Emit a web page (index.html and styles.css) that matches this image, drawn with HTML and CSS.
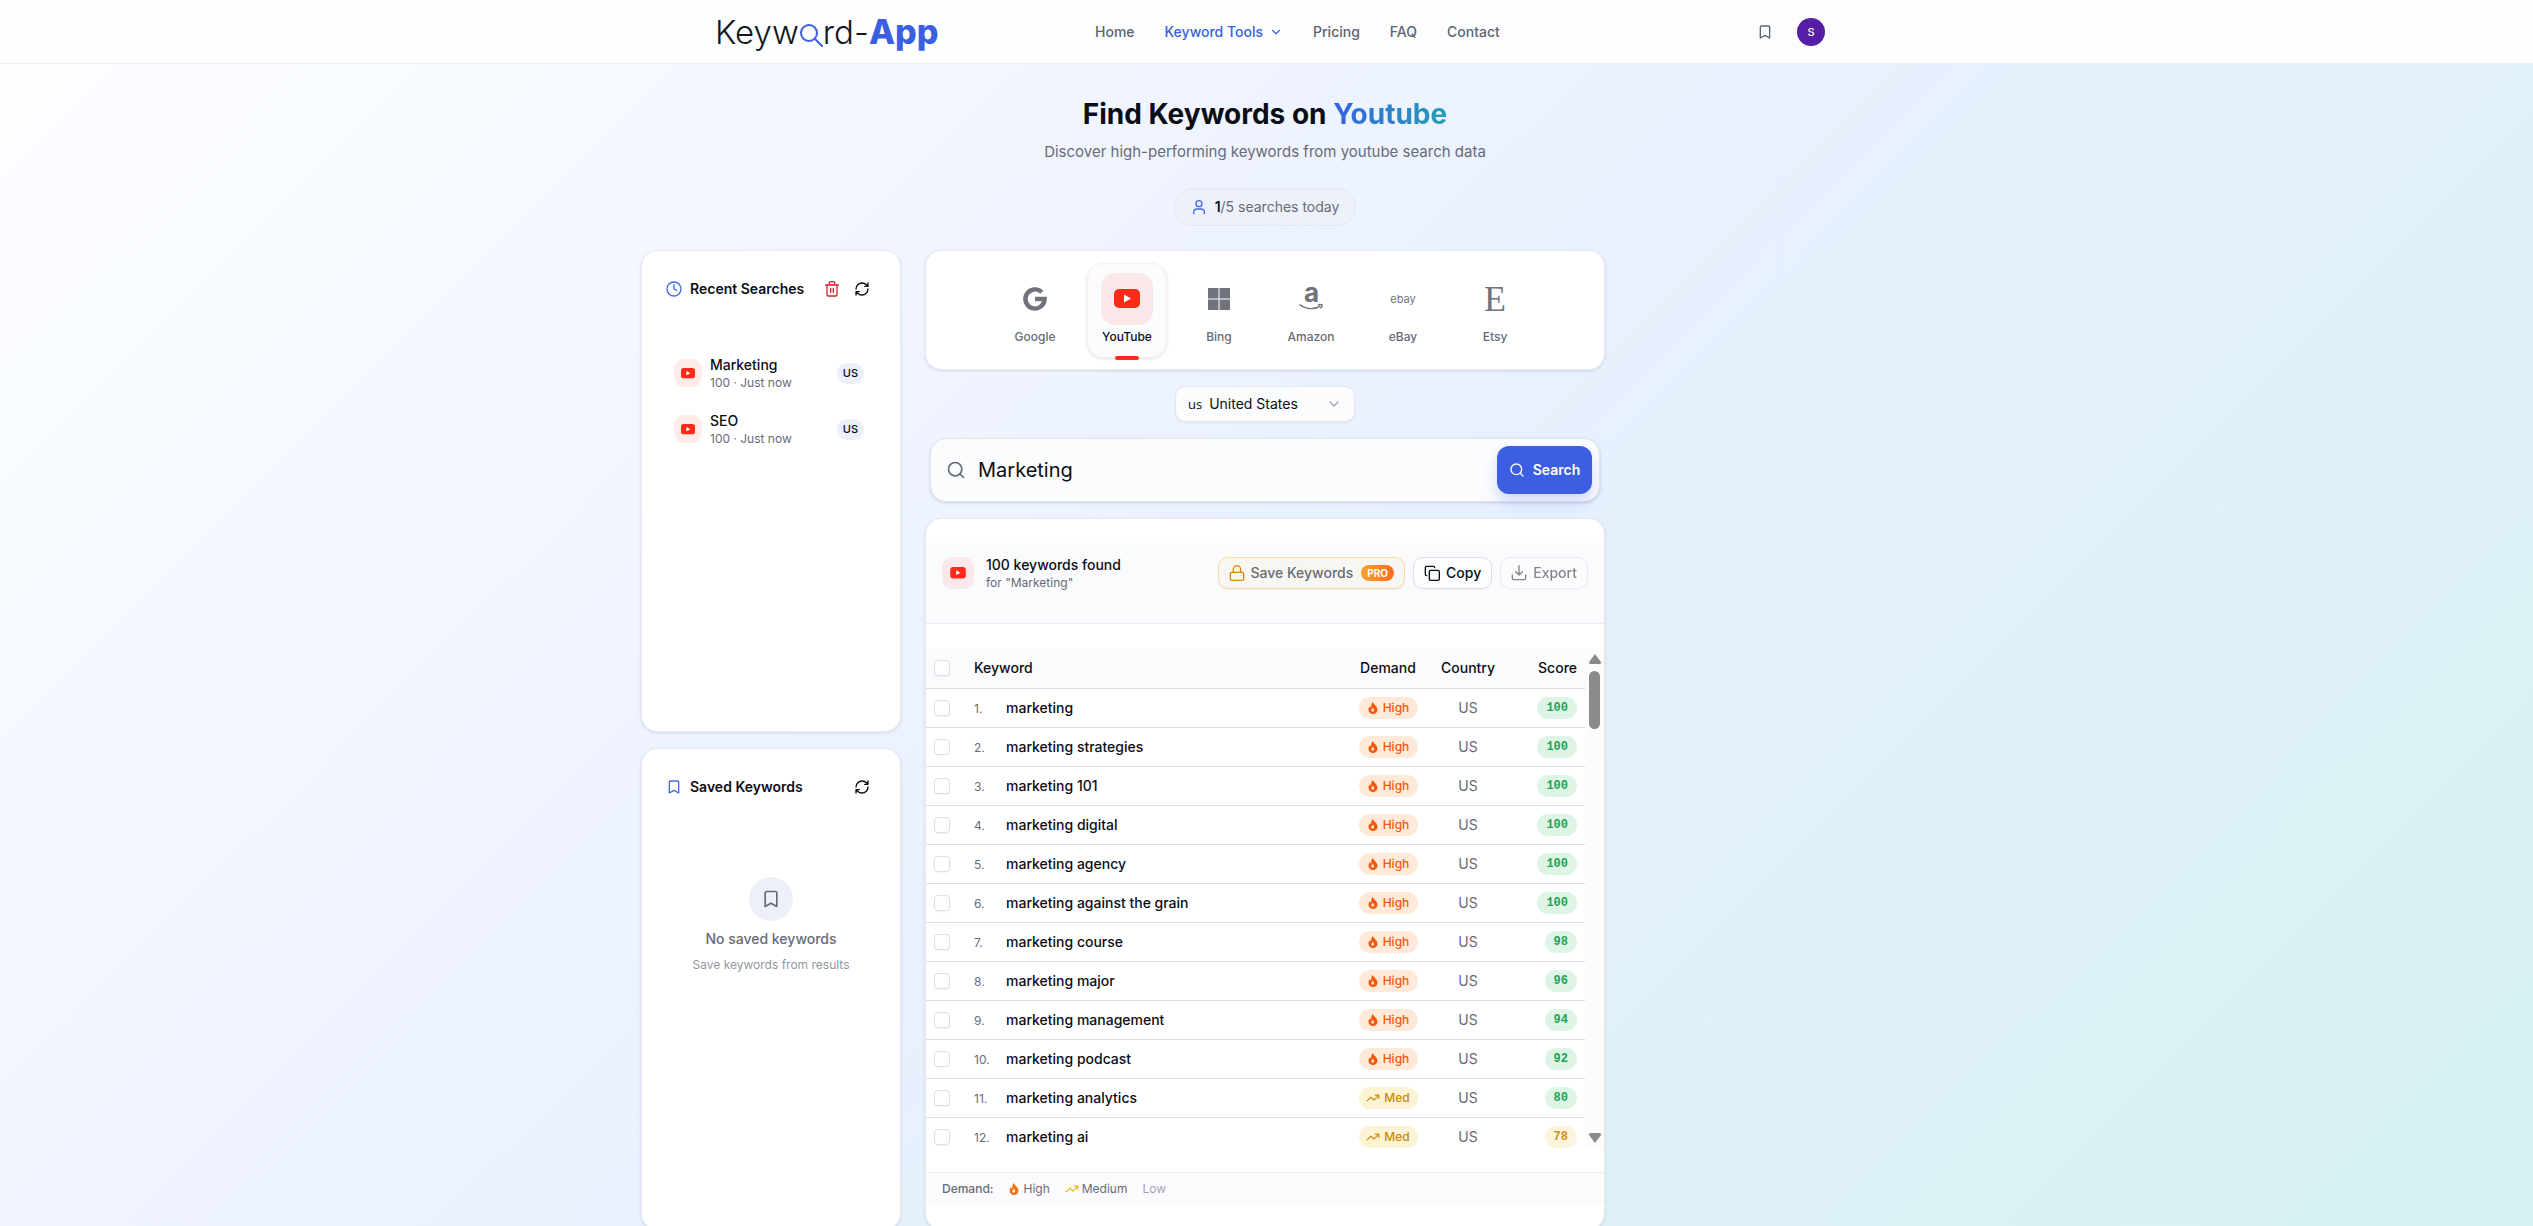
FILE: index.html
```html
<!DOCTYPE html>
<html lang="en">
<head>
<meta charset="utf-8">
<meta name="viewport" content="width=device-width, initial-scale=1">
<title>Find Keywords on Youtube - Keyword-App</title>
<link rel="stylesheet" href="styles.css">
</head>
<body>
<svg class="sprite" aria-hidden="true">
  <symbol id="bookmark" viewBox="0 0 24 24"><path d="m19 21-7-4-7 4V5a2 2 0 0 1 2-2h10a2 2 0 0 1 2 2v16z"/></symbol>
  <symbol id="chevron" viewBox="0 0 24 24"><path d="m6 9 6 6 6-6"/></symbol>
  <symbol id="refresh" viewBox="0 0 24 24"><path d="M3 12a9 9 0 0 1 9-9 9.75 9.75 0 0 1 6.74 2.74L21 8M21 3v5h-5M21 12a9 9 0 0 1-9 9 9.75 9.75 0 0 1-6.74-2.74L3 16M8 16H3v5"/></symbol>
  <symbol id="search" viewBox="0 0 24 24"><circle cx="11" cy="11" r="8"/><path d="m21 21-4.300-4.300"/></symbol>
  <symbol id="trend" viewBox="0 0 24 24"><path d="M22 7 13.500 15.500 8.500 10.500 2 17M16 7h6v6"/></symbol>
  <symbol id="flame" viewBox="0 0 24 24"><path fill="currentColor" stroke="none" fill-rule="evenodd" d="M11.500 0C13.500 5 21 8.500 21 15.500 21 20.500 17 24 12 24S3 20.500 3 15.500C3 12 4.500 9.800 6.300 8 6.500 10 7.200 11 8.300 11.500 8 7 9 3 11.500 0ZM11 11C11.500 13.500 8.500 14 8.500 16.500 8.500 18.200 9.800 19.300 11.400 19.300S14.200 18.200 14.200 16.500C14.200 14.300 12.500 13 11 11Z"/></symbol>
  <symbol id="youtube" viewBox="0 0 26 20"><rect width="26" height="19" y="0" rx="5" fill="#ff2a1a" stroke="none"/><path d="M10 5.500v8l7-4z" fill="#fff" stroke="none"/></symbol>
</svg>

<header class="topbar">
  <div class="topbar-inner">
    <a class="logo" href="#" aria-label="Keyword-App">
      <span>Keyw</span><svg class="logo-glass" viewBox="0 0 24 24" aria-hidden="true"><circle cx="10" cy="10" r="8"/><path d="m16 16 7 7"/></svg><span>rd-</span><b>App</b>
    </a>
    <nav class="nav">
      <a href="#">Home</a>
      <a href="#" class="active">Keyword Tools <svg class="icon s14"><use href="#chevron"/></svg></a>
      <a href="#">Pricing</a>
      <a href="#">FAQ</a>
      <a href="#">Contact</a>
    </nav>
    <div class="account">
      <button class="ghost" aria-label="Bookmarks"><svg class="icon s16"><use href="#bookmark"/></svg></button>
      <button class="avatar" aria-label="Account">S</button>
    </div>
  </div>
</header>

<main class="page">
  <h1>Find Keywords on <span>Youtube</span></h1>
  <p class="subtitle">Discover high-performing keywords from youtube search data</p>
  <div class="quota">
    <svg class="icon s16" viewBox="0 0 24 24"><circle cx="12" cy="7" r="4.500"/><path d="M4 22v-2a5 5 0 0 1 5-5h6a5 5 0 0 1 5 5v2"/></svg>
    <span><b>1</b>/5 searches today</span>
  </div>

  <div class="columns">
    <aside class="side">
      <section class="card panel">
        <div class="panel-head">
          <svg class="icon s16 blue" viewBox="0 0 24 24"><circle cx="12" cy="12" r="10.500"/><path d="M12 5.500V12l4 2"/></svg>
          <h2>Recent Searches</h2>
          <button class="ghost red" aria-label="Clear recent searches"><svg class="icon s16" viewBox="0 0 24 24"><path d="M2.500 6h19M19.500 6v14.500a2 2 0 0 1-2 2h-11a2 2 0 0 1-2-2V6M8 6V3a2 2 0 0 1 2-2h4a2 2 0 0 1 2 2v3M10 11v6M14 11v6"/></svg></button>
          <button class="ghost" aria-label="Refresh recent searches"><svg class="icon s16"><use href="#refresh"/></svg></button>
        </div>
        <ul class="recent">
          <li><span class="tile small"><svg><use href="#youtube"/></svg></span><div><strong>Marketing</strong><small>100 · Just now</small></div><span class="region">US</span></li>
          <li><span class="tile small"><svg><use href="#youtube"/></svg></span><div><strong>SEO</strong><small>100 · Just now</small></div><span class="region">US</span></li>
        </ul>
      </section>
      <section class="card panel">
        <div class="panel-head">
          <svg class="icon s16 blue"><use href="#bookmark"/></svg>
          <h2>Saved Keywords</h2>
          <button class="ghost" aria-label="Refresh saved keywords"><svg class="icon s16"><use href="#refresh"/></svg></button>
        </div>
        <div class="empty">
          <span class="empty-icon"><svg class="icon s20"><use href="#bookmark"/></svg></span>
          <p>No saved keywords</p>
          <small>Save keywords from results</small>
        </div>
      </section>
    </aside>

    <div class="content">
      <div class="card platforms">
        <button><span class="pic"><svg class="glyph" viewBox="0 0 24 24"><path d="M18.800 5.200A9.600 9.600 0 1 0 21.600 12H12" fill="none" stroke="currentColor" stroke-width="4.400"/></svg></span>Google</button>
        <button class="selected"><span class="pic"><svg class="yt"><use href="#youtube"/></svg></span>YouTube</button>
        <button><span class="pic"><svg class="glyph" viewBox="0 0 24 24"><path fill="currentColor" d="M1 1h10.500v10.500H1zM12.500 1H23v10.500H12.500zM1 12.500h10.500V23H1zM12.500 12.500H23V23H12.500z"/></svg></span>Bing</button>
        <button><span class="pic"><svg class="glyph" viewBox="0 0 24 24"><text x="12.500" y="15" text-anchor="middle" font-size="26" font-weight="700" fill="currentColor">a</text><path d="M.500 17.500C7 22.500 15 23 21.500 18.800M19 17.800c1.500-.500 3-.700 4 0 .200 1-.400 2.500-1.500 3.600" fill="none" stroke="currentColor" stroke-width="1.400"/></svg></span>Amazon</button>
        <button><span class="pic"><span class="ebay">ebay</span></span>eBay</button>
        <button><span class="pic"><span class="etsy">E</span></span>Etsy</button>
      </div>

      <label class="country">
        <span>us</span>
        <select aria-label="Country"><option>United States</option></select>
        <svg class="icon s16"><use href="#chevron"/></svg>
      </label>

      <form class="searchbar">
        <svg class="icon s20"><use href="#search"/></svg>
        <input type="text" value="Marketing" aria-label="Keyword">
        <button type="button"><svg class="icon s16"><use href="#search"/></svg>Search</button>
      </form>

      <section class="card results">
        <div class="results-head">
          <span class="tile"><svg><use href="#youtube"/></svg></span>
          <div class="found"><strong>100 keywords found</strong><small>for "Marketing"</small></div>
          <button class="btn save"><svg class="icon s16" viewBox="0 0 24 24"><rect x="2" y="11" width="20" height="12" rx="2"/><path d="M6.500 11V6.500a5.500 5.500 0 0 1 11 0V11"/></svg>Save Keywords <span class="pro">PRO</span></button>
          <button class="btn"><svg class="icon s16" viewBox="0 0 24 24"><rect x="8" y="8" width="15" height="15" rx="2"/><path d="M4 16a2 2 0 0 1-2-2V4c0-1.100.900-2 2-2h10a2 2 0 0 1 2 2"/></svg>Copy</button>
          <button class="btn" disabled><svg class="icon s16" viewBox="0 0 24 24"><path d="M12 1v14M7 10l5 5 5-5M2 15v5a2 2 0 0 0 2 2h16a2 2 0 0 0 2-2v-5"/></svg>Export</button>
        </div>

        <div class="viewport">
          <div class="rows">
            <table>
              <colgroup><col class="c-check"><col><col class="c-demand"><col class="c-country"><col class="c-score"></colgroup>
              <thead><tr><th><input type="checkbox" aria-label="Select all"></th><th>Keyword</th><th class="mid">Demand</th><th class="mid">Country</th><th class="end">Score</th></tr></thead>
              <tbody>
                <tr><td><input type="checkbox" aria-label="Select marketing"></td><td><i>1.</i>marketing</td><td class="mid"><span class="demand high"><svg class="icon s12"><use href="#flame"/></svg>High</span></td><td class="mid muted">US</td><td class="end"><span class="score">100</span></td></tr>
                <tr><td><input type="checkbox" aria-label="Select marketing strategies"></td><td><i>2.</i>marketing strategies</td><td class="mid"><span class="demand high"><svg class="icon s12"><use href="#flame"/></svg>High</span></td><td class="mid muted">US</td><td class="end"><span class="score">100</span></td></tr>
                <tr><td><input type="checkbox" aria-label="Select marketing 101"></td><td><i>3.</i>marketing 101</td><td class="mid"><span class="demand high"><svg class="icon s12"><use href="#flame"/></svg>High</span></td><td class="mid muted">US</td><td class="end"><span class="score">100</span></td></tr>
                <tr><td><input type="checkbox" aria-label="Select marketing digital"></td><td><i>4.</i>marketing digital</td><td class="mid"><span class="demand high"><svg class="icon s12"><use href="#flame"/></svg>High</span></td><td class="mid muted">US</td><td class="end"><span class="score">100</span></td></tr>
                <tr><td><input type="checkbox" aria-label="Select marketing agency"></td><td><i>5.</i>marketing agency</td><td class="mid"><span class="demand high"><svg class="icon s12"><use href="#flame"/></svg>High</span></td><td class="mid muted">US</td><td class="end"><span class="score">100</span></td></tr>
                <tr><td><input type="checkbox" aria-label="Select marketing against the grain"></td><td><i>6.</i>marketing against the grain</td><td class="mid"><span class="demand high"><svg class="icon s12"><use href="#flame"/></svg>High</span></td><td class="mid muted">US</td><td class="end"><span class="score">100</span></td></tr>
                <tr><td><input type="checkbox" aria-label="Select marketing course"></td><td><i>7.</i>marketing course</td><td class="mid"><span class="demand high"><svg class="icon s12"><use href="#flame"/></svg>High</span></td><td class="mid muted">US</td><td class="end"><span class="score">98</span></td></tr>
                <tr><td><input type="checkbox" aria-label="Select marketing major"></td><td><i>8.</i>marketing major</td><td class="mid"><span class="demand high"><svg class="icon s12"><use href="#flame"/></svg>High</span></td><td class="mid muted">US</td><td class="end"><span class="score">96</span></td></tr>
                <tr><td><input type="checkbox" aria-label="Select marketing management"></td><td><i>9.</i>marketing management</td><td class="mid"><span class="demand high"><svg class="icon s12"><use href="#flame"/></svg>High</span></td><td class="mid muted">US</td><td class="end"><span class="score">94</span></td></tr>
                <tr><td><input type="checkbox" aria-label="Select marketing podcast"></td><td><i>10.</i>marketing podcast</td><td class="mid"><span class="demand high"><svg class="icon s12"><use href="#flame"/></svg>High</span></td><td class="mid muted">US</td><td class="end"><span class="score">92</span></td></tr>
                <tr><td><input type="checkbox" aria-label="Select marketing analytics"></td><td><i>11.</i>marketing analytics</td><td class="mid"><span class="demand med"><svg class="icon s14"><use href="#trend"/></svg>Med</span></td><td class="mid muted">US</td><td class="end"><span class="score">80</span></td></tr>
                <tr><td><input type="checkbox" aria-label="Select marketing ai"></td><td><i>12.</i>marketing ai</td><td class="mid"><span class="demand med"><svg class="icon s14"><use href="#trend"/></svg>Med</span></td><td class="mid muted">US</td><td class="end"><span class="score fair">78</span></td></tr>
              </tbody>
            </table>
          </div>
          <div class="track" aria-hidden="true">
            <svg viewBox="0 0 12 10"><path d="M6 0 12 8q0 2-1 2H1q-1 0-1-2z"/></svg>
            <span class="thumb"></span>
            <svg viewBox="0 0 12 10"><path d="M6 10 12 2q0-2-1-2H1Q0 0 0 2z"/></svg>
          </div>
        </div>

        <div class="legend">
          <b>Demand:</b>
          <span><svg class="icon s12 orange"><use href="#flame"/></svg>High</span>
          <span><svg class="icon s14 yellow"><use href="#trend"/></svg>Medium</span>
          <span class="low">Low</span>
        </div>
      </section>
    </div>
  </div>
</main>
</body>
</html>
```
FILE: styles.css
```css
* { box-sizing: border-box; }

:root {
  --ink: #0b0e16;
  --muted: #676b78;
  --blue: #3b5fe0;
  --line: #e8eaf0;
}

html { scrollbar-width: none; }

body {
  margin: 0;
  min-height: 100vh;
  font: 14px/20px Inter, "Liberation Sans", sans-serif;
  color: var(--ink);
  background: linear-gradient(135deg, #fdfeff 0%, #e9f0ff 50%, #d5f2f0 100%);
}

h1, h2, p, ul { margin: 0; padding: 0; }
button, input, select { font: inherit; color: inherit; }
button { border: 0; background: none; padding: 0; cursor: pointer; }
small { font-size: 12px; line-height: 16px; }
strong { font-weight: 500; }

.sprite { position: absolute; width: 0; height: 0; }
.icon { flex: none; fill: none; stroke: currentColor; stroke-width: 2; stroke-linecap: round; stroke-linejoin: round; }
.s12 { width: 12px; height: 12px; }
.s14 { width: 14px; height: 14px; }
.s16 { width: 16px; height: 16px; }
.s20 { width: 20px; height: 20px; }
.blue { color: #4468e6; }

/* Top bar */
.topbar { background: #fcfdff; border-bottom: 1px solid #ebedf1; }
.topbar-inner {
  display: grid;
  grid-template-columns: 390px 1fr auto;
  align-items: center;
  max-width: 1155px;
  height: 63px;
  margin: 0 auto;
  padding: 0 19px 0 16px;
}
.logo { display: flex; align-items: center; padding-left: 10px; font-size: 33px; line-height: 40px; font-weight: 300; color: #15171c; text-decoration: none; }
.logo b { color: var(--blue); font-size: 34px; font-weight: 800; }
.logo-glass { width: 24px; height: 24px; margin-top: 6px; fill: none; stroke: var(--blue); stroke-width: 2; stroke-linecap: round; }
.nav { display: flex; gap: 30px; }
.nav a { display: flex; align-items: center; gap: 6px; color: #5f636e; font-weight: 500; text-decoration: none; }
.nav .active { color: var(--blue); }
.account { display: flex; align-items: center; gap: 18px; }
.account .ghost { color: #5f636e; }
.avatar { width: 28px; height: 28px; border-radius: 50%; background: #561ea6; color: #fff; font-size: 11px; line-height: 16px; font-weight: 500; }
.ghost { display: grid; place-items: center; width: 28px; height: 28px; }
.red { color: #d8202f; }

/* Page intro */
.page { max-width: 1283px; margin: 0 auto; padding: 32px 19px 0 16px; }
h1 { font-size: 28px; line-height: 36px; font-weight: 700; text-align: center; }
h1 span { color: transparent; background: linear-gradient(90deg, #3563df, #249eb4); background-clip: text; -webkit-background-clip: text; }
.subtitle { margin-top: 8px; color: var(--muted); font-size: 15px; line-height: 24px; text-align: center; }
.quota {
  display: flex;
  align-items: center;
  gap: 8px;
  width: max-content;
  height: 38px;
  margin: 24px auto;
  padding: 0 16px;
  border: 1px solid #e4e8f1;
  border-radius: 19px;
  background: #edf1f9;
  color: var(--muted);
}
.quota .icon { color: #4468e6; }
.quota b { color: var(--ink); font-weight: 600; }

.columns { display: grid; grid-template-columns: 260px minmax(0, 680px) 260px; gap: 24px; }
.card { background: #fff; border: 1px solid var(--line); border-radius: 16px; box-shadow: 0 1px 3px rgba(20, 30, 60, .12); }

/* Side panels */
.side { display: grid; grid-template-rows: 1fr 1fr; gap: 16px; }
.panel { padding: 24px; }
.panel-head { display: flex; align-items: center; gap: 2px; height: 28px; }
.panel-head h2 { flex: 1; margin-left: 6px; font-size: 14px; line-height: 20px; font-weight: 600; }
.recent { list-style: none; display: grid; margin-top: 42px; }
.recent li { display: flex; align-items: center; gap: 8px; height: 56px; padding: 0 12px 0 8px; }
.recent div { display: grid; flex: 1; }
.recent small, .found small { color: var(--muted); }
.tile { display: grid; place-items: center; flex: none; width: 32px; height: 32px; border-radius: 10px; background: #fae8ea; }
.tile svg { width: 16px; height: 12px; }
.tile.small { width: 28px; height: 28px; background: #ffebea; }
.tile.small svg { width: 14px; height: 11px; }
.region { padding: 2px 6px; border-radius: 11px; background: #ecf0f8; font-size: 11px; line-height: 17px; font-weight: 500; }
.empty { display: grid; justify-items: center; margin-top: 76px; color: var(--muted); }
.empty-icon { display: grid; place-items: center; width: 44px; height: 44px; border-radius: 50%; background: #ecf0f8; }
.empty p { margin: 8px 0; font-weight: 500; }
.empty small { color: #93969f; }

/* Platform picker */
.content { display: grid; gap: 16px; }
.platforms { display: flex; justify-content: center; gap: 12px; height: 120px; padding: 12px; }
.platforms button {
  display: flex;
  flex-direction: column;
  align-items: center;
  position: relative;
  width: 80px;
  height: 95px;
  padding-top: 9px;
  border: 1px solid transparent;
  border-radius: 16px;
  color: var(--muted);
  font-size: 12px;
  line-height: 16px;
  font-weight: 500;
}
.pic { display: grid; place-items: center; width: 52px; height: 52px; margin-bottom: 4px; border-radius: 14px; color: #71737c; }
.glyph { width: 24px; height: 24px; overflow: visible; }
.ebay { font-size: 11px; line-height: 16px; font-weight: 400; }
.etsy { font: 36px/40px "Liberation Serif", serif; }
.yt { width: 26px; height: 20px; }
.platforms .selected { color: var(--ink); background: #fbfcfe; border-color: #f0f2f6; box-shadow: 0 1px 3px rgba(20, 30, 60, .12); }
.selected .pic { background: #fbe9e9; }
.selected::after { content: ""; position: absolute; bottom: -3px; left: 27px; width: 24px; height: 4px; border-radius: 2px; background: #ff2a1a; }

/* Country and search */
.country {
  display: flex;
  align-items: center;
  gap: 7px;
  justify-self: center;
  width: 180px;
  height: 36px;
  padding: 0 12px;
  border: 1px solid #e2e6ee;
  border-radius: 10px;
  background: #fbfcfe;
  box-shadow: 0 1px 2px rgba(20, 30, 60, .06);
}
.country span { font: 13px/20px "Open Sans", sans-serif; }
.country select { flex: 1; min-width: 0; padding: 0; border: 0; background: none; appearance: none; outline: 0; }
.country .icon { color: #a0a3ab; }
.searchbar {
  display: flex;
  align-items: center;
  gap: 12px;
  height: 64px;
  margin: 0 5px;
  padding: 0 7px 0 15px;
  border: 1px solid #e2e5ec;
  border-radius: 16px;
  background: #fbfcfe;
  box-shadow: 0 1px 3px rgba(20, 30, 60, .16);
}
.searchbar > .icon { color: var(--muted); }
.searchbar input { flex: 1; min-width: 0; padding: 0; border: 0; outline: 0; background: none; font-size: 20px; line-height: 28px; }
.searchbar button {
  display: flex;
  align-items: center;
  justify-content: center;
  gap: 8px;
  width: 95px;
  height: 48px;
  border-radius: 12px;
  background: var(--blue);
  color: #fff;
  font-weight: 600;
  box-shadow: 0 8px 14px rgba(59, 95, 224, .22);
}

/* Results */
.results { padding: 24px 0; }
.results-head { display: flex; align-items: flex-start; gap: 8px; height: 81px; padding: 14px 16px 0; background: #fafbfd; border-bottom: 1px solid var(--line); }
.found { display: grid; flex: 1; margin: -2px 0 0 4px; }
.btn {
  display: flex;
  align-items: center;
  gap: 6px;
  height: 32px;
  padding: 0 10px;
  border: 1px solid #dcdfe6;
  border-radius: 10px;
  background: #fcfdff;
  font-weight: 500;
  box-shadow: 0 1px 2px rgba(20, 30, 60, .06);
}
.btn:disabled { opacity: .5; }
.btn.save { color: var(--muted); background: #f8f6f1; border-color: #fbd9a0; }
.save .icon { color: #df8416; }
.pro { margin-left: 2px; padding: 0 6px; border-radius: 8px; background: linear-gradient(90deg, #fba12b, #fd6a20); color: #fff; font-size: 10px; line-height: 16px; font-weight: 700; }

.viewport { display: flex; height: 500px; margin: 24px 0; }
.rows { flex: 1; overflow: hidden; }
table { width: 100%; table-layout: fixed; border-collapse: separate; border-spacing: 0; }
.c-check { width: 40px; }
.c-demand { width: 90px; }
.c-country { width: 70px; }
.c-score { width: 82px; }
th, td { height: 39px; padding: 0 8px; border-bottom: 1px solid #dcdee5; text-align: left; font-weight: 500; white-space: nowrap; }
th { height: 41px; background: #fafbfd; }
td i { display: inline-block; width: 32px; color: var(--muted); font-size: 12px; font-style: normal; font-weight: 400; }
.mid { text-align: center; }
.end { text-align: right; }
.muted { color: var(--muted); font-weight: 400; }
input[type="checkbox"] { appearance: none; display: block; width: 16px; height: 16px; margin: 0; border: 1px solid #dcdfe8; border-radius: 4px; background: #fff; box-shadow: 0 1px 2px rgba(20, 30, 60, .06); }
.demand { display: inline-flex; align-items: center; justify-content: center; gap: 4px; width: 59px; height: 22px; border-radius: 11px; font-size: 12px; line-height: 16px; vertical-align: middle; }
.high { color: #f4590b; background: #ffe9d8; }
.med { color: #c98a0c; background: #fcf2d4; }
.score { display: inline-block; height: 22px; padding: 0 9px; border-radius: 11px; background: #def5e6; color: #22a357; font: 700 12px/22px "Liberation Mono", monospace; vertical-align: middle; }
.fair { background: #fcf4dd; color: #cf9124; }
.track { display: flex; flex-direction: column; align-items: center; width: 19px; padding: 6px 0 5px; background: #fcfcfc; }
.track svg { width: 12px; height: 10px; fill: #8b8b8b; }
.thumb { width: 11px; height: 58px; margin: 7px 0 auto; border-radius: 6px; background: #8b8b8b; }

.legend { display: flex; align-items: center; gap: 15px; height: 33px; padding: 0 16px; border-top: 1px solid var(--line); background: #fbfbfe; color: var(--muted); font-size: 12px; line-height: 16px; }
.legend b { font-weight: 500; }
.legend span { display: flex; align-items: center; gap: 3px; }
.orange { color: #f9700f; }
.yellow { color: #eab308; }
.legend .low { color: #9ba3b8; }

@media (max-width: 1100px) {
  .columns { grid-template-columns: 1fr; }
  .topbar-inner { grid-template-columns: auto 1fr auto; gap: 24px; }
}
```
